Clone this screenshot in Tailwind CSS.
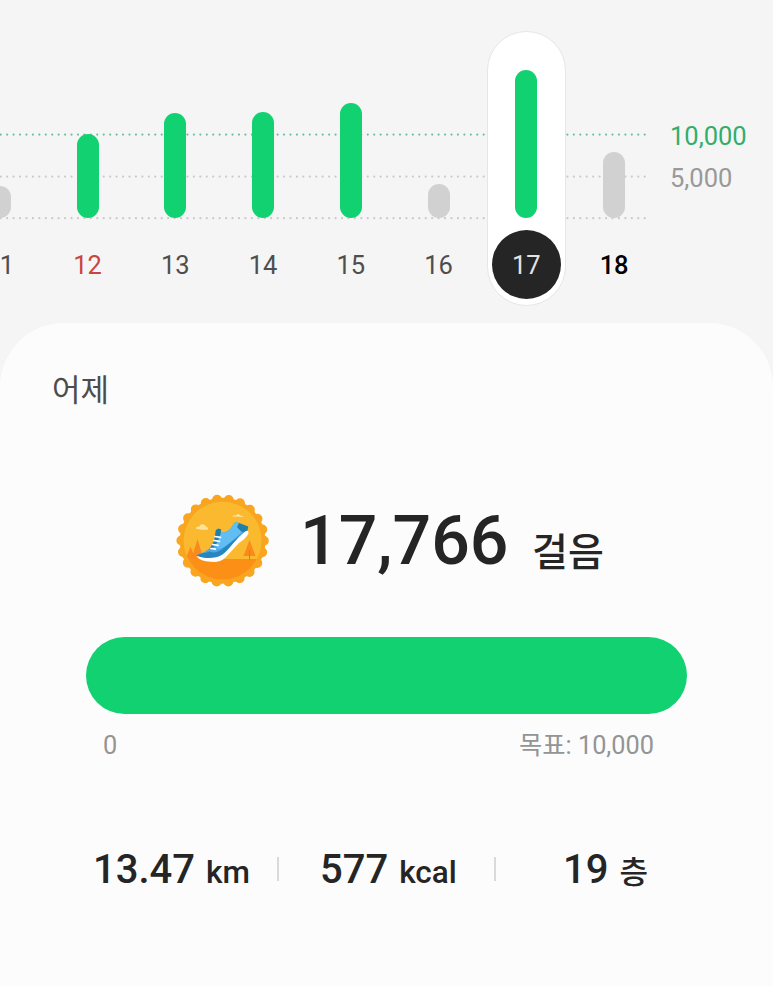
<!DOCTYPE html>
<html lang="ko">
<head>
    <meta charset="UTF-8">
    <meta name="viewport" content="width=device-width, initial-scale=1.0">
    <title>걸음</title>
    <script src="https://cdn.jsdelivr.net/npm/@tailwindcss/browser@4"></script>
</head>
<body class="h-[986px] overflow-hidden bg-[#f5f5f5] font-[Roboto,'Noto_Sans_CJK_KR',sans-serif] text-[#252525]">
    <!-- 일별 걸음 차트 -->
    <section class="relative flex h-[323px] overflow-hidden">
        <svg class="absolute left-0 top-0" width="660" height="230" fill="none" stroke-width="2.2" stroke-linecap="round" stroke-dasharray="0 6.44">
            <path d="M.7 134.6H645" stroke="#6cbf98"/>
            <path d="M.7 176.6H645" stroke="#c9c9c9"/>
            <path d="M.7 218.2H645" stroke="#c9c9c9"/>
        </svg>

        <div id="days" class="relative -ml-11 flex w-[702px] shrink-0"></div>

        <div class="pt-[119px] pl-[12px] text-[25.5px] leading-[34px]">
            <p class="mb-[8px] text-[#2fae6e]">10,000</p>
            <p class="text-[#999]">5,000</p>
        </div>
    </section>

    <!-- 상세 카드 -->
    <main class="h-[663px] rounded-t-[64px] bg-[#fcfcfc] pt-[48px]">
        <h1 class="ml-[52px] h-10 text-[31px] leading-10 text-[#4c4c4c]">어제</h1>

        <div class="mt-[81px] flex h-[98px] items-center pl-[174px]">
            <svg class="shrink-0" width="98" height="98" viewBox="0 0 98 98">
                <circle cx="48.6" cy="48.7" r="43" fill="#f9a51f"/>
                <circle cx="48.6" cy="48.7" r="41.2" fill="none" stroke="#f9a51f" stroke-width="10" stroke-linecap="round" stroke-dasharray="0 11.767"/>
                <clipPath id="disc"><circle cx="48.6" cy="48.7" r="39"/></clipPath>
                <g clip-path="url(#disc)">
                    <path d="M0 0h98v98H0z" fill="#fbb92f"/>
                    <path d="M0 67h98v31H0z" fill="#fc9017"/>
                    <path d="M23.5 47l6 20h-12zM16.5 54.5l5 12.500h-10zM75.500 48l6 16h-12z" fill="#f98a1b"/>
                    <path d="M75.500 58v9.500" stroke="#df791d"/>
                </g>
                <path d="M21.500 36.500q1.500-2.500 4-2 1-3 4-2t3 2.500q2 0 1.500 2.500-6 1-12.500-1zM58 24.500q2-2 4-1 2-3 4.500 0l3.500 1.500z" fill="#fde3a0"/>
                <path d="M22.700 63.500C27 60.500 34 60 37 54l4-8 5-5.500c5 .5 10-1 13.500-9l3-1.700L73 35l.5 4L58 55 46 64l-12 2z" fill="#4ba9e5"/>
                <path d="M47 40.500c5 .5 9-1 12.500-9l3-1.700L71 37 58 49c-4 3-8 7-14 8l-2-3z" fill="#62bdf3"/>
                <path d="M41.800 38l2.700-1.500 2.700 1-.7 5-3.500 8-4 5-3 1 4-7zM65 31l9.300 3.500-1 4.500-5.300 1q-4-3-5-5z" fill="#217fab"/>
                <path d="M22.700 63.300c5-2.300 9-2.300 13-3.800 4 2.500 9 .5 14-3.500L72 38.500l2 1L57 56 47 66H28z" fill="#2686bd"/>
                <path d="M22.500 64c8 2.500 18 3.500 26-1.500C56 57 62 46 72 39q3-1 2.300 3-3 5-9.300 9L51 66c-4 4-10 4.500-17 3.500-6-.8-10-2.500-11.500-5.500z" fill="#fff"/>
                <path d="M41 44.500l5.500.8M40 48.500l5.500.8M38.500 52.500l5.500.8M37 56.500l4.500.6" stroke="#fff" stroke-width="1.700" stroke-linecap="round"/>
            </svg>
            <p class="ml-[28px] flex items-baseline font-medium">
                <span class="w-[232px] text-[68px] leading-[98px]">17,766</span>
                <span class="relative top-0.5 text-[39px] leading-10">걸음</span>
            </p>
        </div>

        <div class="mx-[86px] mt-[47px] h-[77px] rounded-full bg-[#12d170]"></div>
        <div class="mt-[14px] mr-[119px] ml-[103px] flex justify-between text-[25.3px] leading-9 text-[#949494]">
            <span>0</span>
            <span>목표: 10,000</span>
        </div>

        <div class="mt-[81px] flex h-[60px] items-center font-medium">
            <p class="-mt-2.5 flex w-[278px] items-baseline gap-[11px] pl-[93px]">
                <span class="text-[40px]">13.47</span>
                <span class="text-[31.5px]">km</span>
            </p>
            <span class="-mt-3 -ml-px h-6 w-0.5 bg-[#dadada]"></span>
            <p class="-mt-2.5 flex w-[215px] items-baseline gap-[11px] pl-[41px]">
                <span class="text-[40px]">577</span>
                <span class="text-[31.5px]">kcal</span>
            </p>
            <span class="-mt-3 h-6 w-0.5 bg-[#dadada]"></span>
            <p class="-mt-2.5 flex items-baseline gap-[11px] pl-[67px]">
                <span class="text-[40px]">19</span>
                <span class="text-[31px]">층</span>
            </p>
        </div>
    </main>

    <script>
        const days = [
            { day: 11, height: 32 },
            { day: 12, height: 84, label: 'text-[#c9463c]' },
            { day: 13, height: 105 },
            { day: 14, height: 106 },
            { day: 15, height: 115 },
            { day: 16, height: 34 },
            { day: 17, height: 148, selected: true },
            { day: 18, height: 66, label: 'text-black font-medium' },
        ];

        document.getElementById('days').innerHTML = days.map(d => {
            const bar = d.height >= 84 ? 'bg-[#12d170]' : 'bg-[#d1d1d1]';
            const label = d.selected
                ? 'bg-[#252525] text-[#e4e4e4]'
                : d.label || 'text-[#4e4e4e]';
            const pill = d.selected ? 'bg-white border-[#e6e6e6]' : 'border-transparent';
            return `
                <div class="flex flex-1 justify-center pt-[31px]">
                    <div class="flex h-[275px] w-[79px] flex-col items-center rounded-full border ${pill}">
                        <div class="flex h-[186px] items-end">
                            <div class="w-[22px] rounded-full ${bar}" style="height: ${d.height}px"></div>
                        </div>
                        <div class="mt-3 flex size-[69px] items-center justify-center rounded-full pt-0.5 text-[25.5px] ${label}">${d.day}</div>
                    </div>
                </div>
            `;
        }).join('');
    </script>
</body>
</html>
